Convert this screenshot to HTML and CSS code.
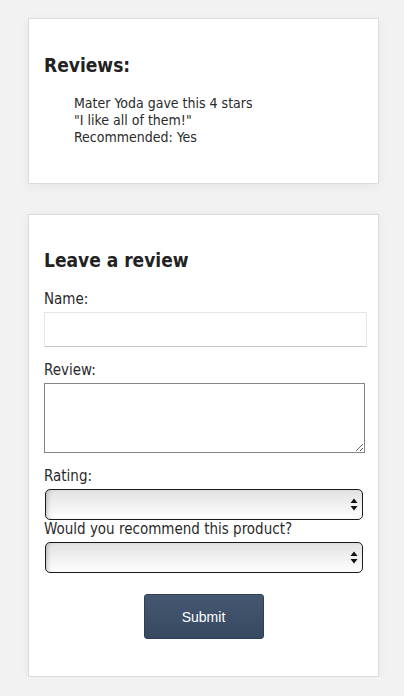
FILE: index.html
```html
<!DOCTYPE html>
<html lang="en">
<head>
<meta charset="utf-8">
<title>Reviews</title>
<link rel="stylesheet" href="styles.css">
</head>
<body>
<main class="page">
  <section class="card reviews">
    <h2 class="card-title">Reviews:</h2>
    <div class="review">
      <div>Mater Yoda gave this 4 stars</div>
      <div>"I like all of them!"</div>
      <div>Recommended: Yes</div>
    </div>
  </section>
  <section class="card form-card">
    <h2 class="card-title">Leave a review</h2>
    <form class="form">
      <label class="label" for="name">Name:</label>
      <input class="input" id="name" type="text">
      <label class="label label-gap" for="review">Review:</label>
      <textarea class="textarea" id="review"></textarea>
      <label class="label label-gap" for="rating">Rating:</label>
      <div class="select-wrap">
        <select class="select" id="rating"><option></option></select>
        <svg class="arrows" width="8" height="13" viewBox="0 0 8 13"><path d="M4 0.5 L7.5 5 L0.5 5 Z M4 12.5 L7.5 8 L0.5 8 Z" fill="#111"/></svg>
      </div>
      <label class="label label-tight" for="rec">Would you recommend this product?</label>
      <div class="select-wrap">
        <select class="select" id="rec"><option></option></select>
        <svg class="arrows" width="8" height="13" viewBox="0 0 8 13"><path d="M4 0.5 L7.5 5 L0.5 5 Z M4 12.5 L7.5 8 L0.5 8 Z" fill="#111"/></svg>
      </div>
      <div class="actions">
        <button class="button" type="button">Submit</button>
      </div>
    </form>
  </section>
</main>
</body>
</html>
```
FILE: styles.css
```css
* { box-sizing: border-box; }
html, body { margin: 0; padding: 0; }
body {
  background: #f2f2f2;
  font-family: "DejaVu Sans Condensed", "DejaVu Sans", sans-serif;
  font-size: 14px;
  color: #2a2a2a;
}
.page {
  padding: 18px 0 0 28px;
  display: flex;
  flex-direction: column;
  gap: 30px;
}
.card {
  width: 351px;
  background: #fff;
  border: 1px solid #dcdcdc;
  box-shadow: 0 2px 10px rgba(0,0,0,0.06);
  padding: 0 15px;
}
.card-title {
  font-size: 19px;
  font-weight: bold;
  margin: 0;
  line-height: 24px;
  color: #222;
}
.reviews { height: 166px; padding-top: 34px; }
.review {
  margin-top: 18px;
  padding-left: 30px;
  line-height: 17px;
}
.form-card { height: 463px; padding-top: 33px; }
.form { display: flex; flex-direction: column; margin-top: 18px; font-size: 15px; }
.label { display: block; line-height: 19px; margin-bottom: 3px; }
.label-gap { margin-top: 14px; }
.label-tight { margin-top: 0; }
.input {
  width: 323px;
  height: 35px;
  border: 1px solid #e6e6e6;
  border-bottom-color: #c8c8c8;
  margin: 0;
  padding: 4px;
  font: inherit;
  display: block;
}
.textarea {
  width: 321px;
  height: 70px;
  border: 1px solid #858585;
  margin: 0;
  padding: 2px;
  font: inherit;
  resize: vertical;
  display: block;
}
.select-wrap {
  position: relative;
  width: 318px;
  margin-left: 1px;
}
.select {
  -webkit-appearance: none;
  appearance: none;
  width: 318px;
  height: 31px;
  border: 1px solid #1a1a1a;
  border-radius: 5px;
  background: linear-gradient(#e2e2e2, #f6f6f6 70%, #ffffff);
  box-shadow: inset 4px 0 5px -3px rgba(0,0,0,0.25);
  display: block;
  margin: 0;
  font: inherit;
}
.arrows {
  position: absolute;
  right: 5px;
  top: 9px;
}
.actions {
  display: flex;
  justify-content: center;
  margin-top: 21px;
}
.button {
  width: 120px;
  height: 45px;
  margin: 0;
  background: linear-gradient(#465871, #374961);
  border: 1px solid #2f3f55;
  border-radius: 3px;
  color: #fff;
  font-family: "Liberation Sans", Arial, sans-serif;
  font-size: 14px;
}
```
